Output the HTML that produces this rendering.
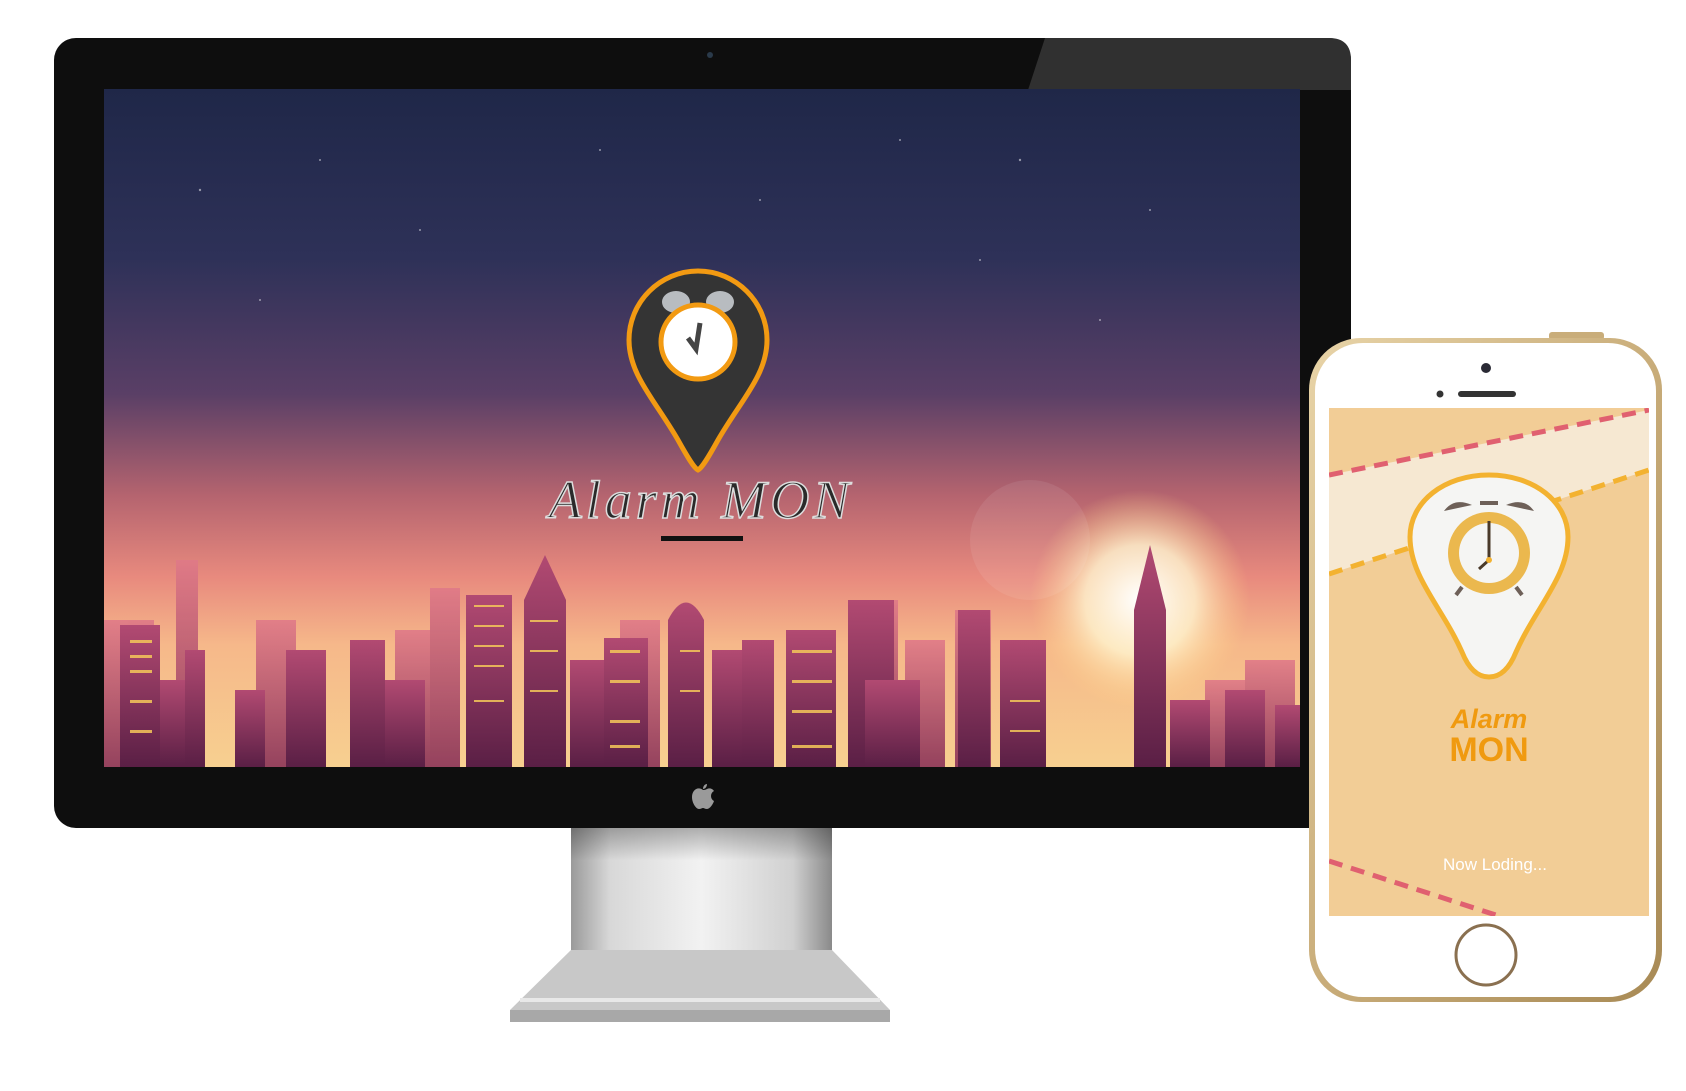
<!DOCTYPE html>
<html><head><meta charset="utf-8"><style>
html,body{margin:0;padding:0;background:#fff;width:1686px;height:1091px;overflow:hidden;position:relative;font-family:"Liberation Sans",sans-serif}
.abs{position:absolute}
</style></head><body>
<svg class="abs" style="left:0;top:0" width="1686" height="1091" viewBox="0 0 1686 1091">
<defs>
<linearGradient id="sky" x1="0" y1="0" x2="0" y2="1">
<stop offset="0" stop-color="#1f2748"/>
<stop offset="0.25" stop-color="#2e3158"/>
<stop offset="0.45" stop-color="#5a3f66"/>
<stop offset="0.6" stop-color="#b5646f"/>
<stop offset="0.72" stop-color="#e88a7e"/>
<stop offset="0.82" stop-color="#f6b88a"/>
<stop offset="1" stop-color="#f7d090"/>
</linearGradient>
<radialGradient id="sun" cx="0.5" cy="0.5" r="0.5">
<stop offset="0" stop-color="#fff" stop-opacity="1"/>
<stop offset="0.5" stop-color="#fff6d0" stop-opacity="0.8"/>
<stop offset="1" stop-color="#ffd080" stop-opacity="0"/>
</radialGradient>
<linearGradient id="bld" x1="0" y1="0" x2="0" y2="1">
<stop offset="0" stop-color="#b24a72"/>
<stop offset="1" stop-color="#5a1f45"/>
</linearGradient>
<linearGradient id="bld2" x1="0" y1="0" x2="0" y2="1">
<stop offset="0" stop-color="#e07a88"/>
<stop offset="1" stop-color="#8a3358"/>
</linearGradient>
<linearGradient id="neck" x1="0" y1="0" x2="1" y2="0">
<stop offset="0" stop-color="#9a9a9a"/><stop offset="0.15" stop-color="#d8d8d8"/><stop offset="0.5" stop-color="#f2f2f2"/><stop offset="0.85" stop-color="#d0d0d0"/><stop offset="1" stop-color="#8a8a8a"/>
</linearGradient>
<linearGradient id="neckv" x1="0" y1="0" x2="0" y2="1">
<stop offset="0" stop-color="#000" stop-opacity="0.35"/><stop offset="0.3" stop-color="#000" stop-opacity="0"/>
</linearGradient>
<linearGradient id="gold" x1="0" y1="0" x2="1" y2="1">
<stop offset="0" stop-color="#e8d4a8"/><stop offset="0.5" stop-color="#c9ad7a"/><stop offset="1" stop-color="#a88a55"/>
</linearGradient>
</defs>
<path d="M571 820 L832 820 L832 955 L571 955 Z" fill="url(#neck)"/>
<rect x="571" y="820" width="261" height="135" fill="url(#neckv)"/>
<path d="M571 950 L832 950 L890 1010 L510 1010 Z" fill="#c8c8c8"/>
<path d="M510 1010 L890 1010 L890 1022 L510 1022 Z" fill="#a8a8a8"/>
<path d="M520 1000 L880 1000" stroke="#e8e8e8" stroke-width="4"/>
<rect x="54" y="38" width="1297" height="790" rx="22" fill="#0e0e0e"/>
<path d="M1045 38 L1329 38 Q1351 38 1351 60 L1351 90 L1028 90 Z" fill="#303030"/>
<circle cx="710" cy="55" r="3" fill="#2a3a4a"/>
<rect x="104" y="89" width="1196" height="678" fill="url(#sky)"/>
<g fill="#fff" opacity="0.5">
<circle cx="200" cy="190" r="1.2"/><circle cx="320" cy="160" r="1"/><circle cx="420" cy="230" r="1"/><circle cx="600" cy="150" r="1"/><circle cx="760" cy="200" r="1"/><circle cx="900" cy="140" r="1"/><circle cx="1020" cy="160" r="1.2"/><circle cx="1150" cy="210" r="1"/><circle cx="260" cy="300" r="1"/><circle cx="1100" cy="320" r="1"/><circle cx="980" cy="260" r="1"/>
</g>
<ellipse cx="1140" cy="600" rx="110" ry="110" fill="url(#sun)"/>
<ellipse cx="1030" cy="540" rx="60" ry="60" fill="#fff" opacity="0.08"/>
<g fill="url(#bld2)" opacity="0.9">
<rect x="104" y="620" width="50" height="147"/><rect x="176" y="560" width="22" height="207"/><rect x="256" y="620" width="40" height="147"/><rect x="395" y="630" width="40" height="137"/><rect x="430" y="588" width="30" height="179"/><rect x="620" y="620" width="40" height="147"/><rect x="858" y="600" width="40" height="167"/><rect x="905" y="640" width="40" height="127"/><rect x="955" y="610" width="36" height="157"/><rect x="1205" y="680" width="40" height="87"/><rect x="1245" y="660" width="50" height="107"/>
</g>
<g fill="url(#bld)">
<rect x="120" y="625" width="40" height="142"/><rect x="160" y="680" width="25" height="87"/><rect x="185" y="650" width="20" height="117"/><rect x="235" y="690" width="30" height="77"/><rect x="286" y="650" width="40" height="117"/><rect x="350" y="640" width="35" height="127"/><rect x="385" y="680" width="40" height="87"/><rect x="466" y="595" width="46" height="172"/><path d="M524 600 L545 555 L566 600 L566 767 L524 767 Z"/><rect x="570" y="660" width="40" height="107"/><rect x="604" y="638" width="44" height="129"/><path d="M668 620 Q686 585 704 620 L704 767 L668 767 Z"/><rect x="712" y="650" width="30" height="117"/><rect x="742" y="640" width="32" height="127"/><rect x="786" y="630" width="50" height="137"/><rect x="848" y="600" width="46" height="167"/><rect x="865" y="680" width="55" height="87"/><rect x="958" y="610" width="32" height="157"/><rect x="1000" y="640" width="46" height="127"/><path d="M1134 610 L1150 545 L1166 610 L1166 767 L1134 767 Z"/><rect x="1170" y="700" width="40" height="67"/><rect x="1225" y="690" width="40" height="77"/><rect x="1275" y="705" width="25" height="62"/>
</g>
<g fill="#f5c85a" opacity="0.85">
<rect x="130" y="640" width="22" height="3"/><rect x="130" y="655" width="22" height="3"/><rect x="130" y="670" width="22" height="3"/><rect x="130" y="700" width="22" height="3"/><rect x="130" y="730" width="22" height="3"/>
<rect x="474" y="605" width="30" height="2"/><rect x="474" y="625" width="30" height="2"/><rect x="474" y="645" width="30" height="2"/><rect x="474" y="665" width="30" height="2"/><rect x="474" y="700" width="30" height="2"/>
<rect x="530" y="620" width="28" height="2"/><rect x="530" y="650" width="28" height="2"/><rect x="530" y="690" width="28" height="2"/>
<rect x="610" y="650" width="30" height="3"/><rect x="610" y="680" width="30" height="3"/><rect x="610" y="720" width="30" height="3"/><rect x="610" y="745" width="30" height="3"/>
<rect x="792" y="650" width="40" height="3"/><rect x="792" y="680" width="40" height="3"/><rect x="792" y="710" width="40" height="3"/><rect x="792" y="745" width="40" height="3"/>
<rect x="1010" y="700" width="30" height="2"/><rect x="1010" y="730" width="30" height="2"/><rect x="680" y="650" width="20" height="2"/><rect x="680" y="690" width="20" height="2"/>
</g>
<path d="M703 790 c-5 -4 -11 0 -11 7 c0 6 4 12 7 12 c2 0 3 -1 4 -1 c1 0 2 1 4 1 c3 0 6 -5 7 -8 c-4 -2 -4 -8 0 -10 c-2 -3 -5 -3 -7 -2 c-2 1 -3 1 -4 1z M703 789 c0 -3 2 -5 4 -5 c0 3 -2 5 -4 5z" fill="#9a9a9a"/>
<path d="M698 271 C660 271 629 302 629 340 C629 375 655 400 678 440 C688 458 694 468 698 470 C702 468 708 458 718 440 C741 400 767 375 767 340 C767 302 736 271 698 271 Z" fill="#343434" stroke="#f29a12" stroke-width="5"/>
<ellipse cx="676" cy="302" rx="14" ry="11" fill="#b8bcc0"/><ellipse cx="720" cy="302" rx="14" ry="11" fill="#b8bcc0"/>
<circle cx="698" cy="342" r="37" fill="#fff" stroke="#f29a12" stroke-width="5"/>
<path d="M688 338 L696 349 L700 323" stroke="#444" stroke-width="5" fill="none"/>
<text x="701" y="518" text-anchor="middle" font-family="Liberation Serif, serif" font-style="italic" font-size="54" fill="#2a2a2a" stroke="#ddd" stroke-width="1.5" letter-spacing="4">Alarm MON</text>
<rect x="661" y="536" width="82" height="5" fill="#111"/>
</svg>

<svg class="abs" style="left:-8px;top:-3px" width="1686" height="1091" viewBox="0 0 1686 1091">
<defs>
<linearGradient id="gold2" x1="0" y1="0" x2="1" y2="1">
<stop offset="0" stop-color="#e8d4a8"/><stop offset="0.5" stop-color="#c9ad7a"/><stop offset="1" stop-color="#a88a55"/>
</linearGradient>
</defs>
<rect x="1557" y="335" width="55" height="8" rx="3" fill="#c9ad7a"/>
<rect x="1317" y="341" width="353" height="664" rx="52" fill="url(#gold2)"/>
<rect x="1323" y="346" width="341" height="654" rx="48" fill="#fff"/>
<circle cx="1494" cy="371" r="5" fill="#2a2a35"/>
<circle cx="1448" cy="397" r="3.5" fill="#333"/>
<rect x="1466" y="394" width="58" height="6" rx="3" fill="#333"/>
<rect x="1337" y="411" width="320" height="508" fill="#f2cd96"/>
<clipPath id="ps"><rect x="1337" y="411" width="320" height="508"/></clipPath>
<g clip-path="url(#ps)">
<path d="M1337 478 L1657 413 L1657 473 L1337 577 Z" fill="#f6e8d2"/>
<path d="M1337 478 L1657 413" stroke="#e06070" stroke-width="5" stroke-dasharray="14 9"/>
<path d="M1337 577 L1657 473" stroke="#f3b230" stroke-width="5" stroke-dasharray="14 9"/>
<path d="M1337 864 L1510 920" stroke="#e06070" stroke-width="5" stroke-dasharray="14 9"/>
</g>
<path d="M1497 478 C1452 478 1418 505 1418 540 C1418 580 1450 610 1470 655 C1478 675 1488 680 1497 680 C1506 680 1516 675 1524 655 C1544 610 1576 580 1576 540 C1576 505 1542 478 1497 478 Z" fill="#f5f5f3" stroke="#f3b230" stroke-width="5"/>
<path d="M1452 514 q10 -14 28 -6 z" fill="#6e6058"/><path d="M1542 514 q-10 -14 -28 -6 z" fill="#6e6058"/>
<rect x="1488" y="504" width="18" height="4" fill="#6e6058"/>
<path d="M1470 590 l-6 8 M1524 590 l6 8" stroke="#6e6058" stroke-width="4"/>
<circle cx="1497" cy="556" r="41" fill="#ebb84e"/>
<circle cx="1497" cy="556" r="30" fill="#f5f5f3"/>
<path d="M1497 524 L1497 563 L1487 572" stroke="#4a3a2a" stroke-width="3" fill="none"/>
<circle cx="1497" cy="563" r="3" fill="#f3b230"/>
<text x="1497" y="731" text-anchor="middle" font-family="Liberation Sans, sans-serif" font-style="italic" font-weight="bold" font-size="27" fill="#f09a10">Alarm</text>
<text x="1497" y="764" text-anchor="middle" font-family="Liberation Sans, sans-serif" font-weight="bold" font-size="34" fill="#f09a10">MON</text>
<text x="1503" y="873" text-anchor="middle" font-family="Liberation Sans, sans-serif" font-size="17" fill="#fff">Now Loding...</text>
<circle cx="1494" cy="958" r="30" fill="none" stroke="#8a7050" stroke-width="3"/>
</svg>
</body></html>
